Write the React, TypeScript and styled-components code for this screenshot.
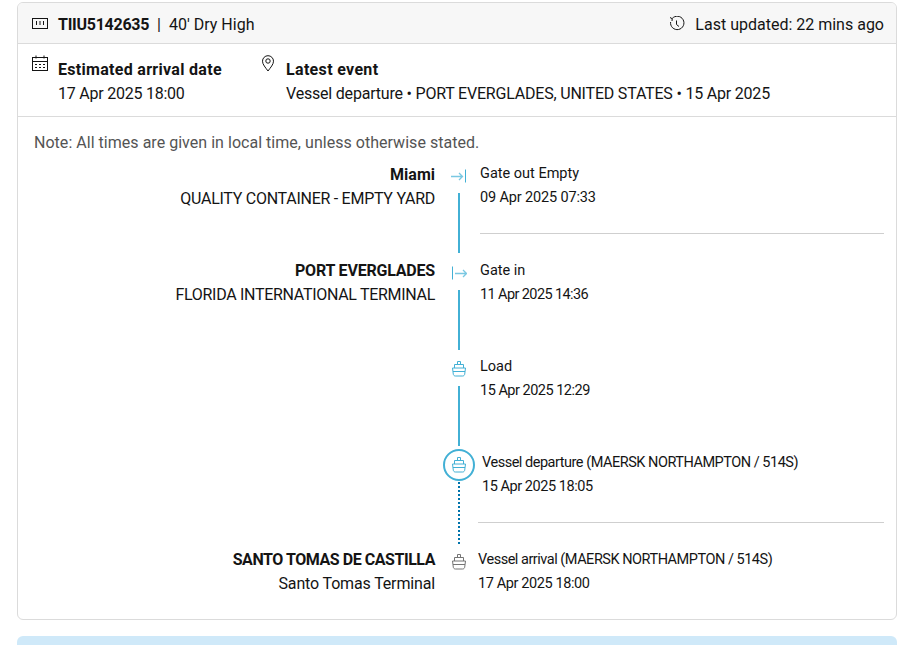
import styled, { createGlobalStyle } from "styled-components";

const GlobalStyle = createGlobalStyle`
  html, body {
    margin: 0;
    height: 645px;
    overflow: hidden;
    background: #fff;
    font-family: Roboto, "Noto Sans", "Liberation Sans", sans-serif;
    color: #141414;
  }
`;

const Page = styled.div`
  padding: 2px 9px 0 17px;
`;

const Card = styled.section`
  height: 618px;
  box-sizing: border-box;
  border: 1px solid #dbdbdb;
  border-radius: 6px;
  overflow: hidden;
`;

const CardHeader = styled.header`
  height: 41px;
  box-sizing: border-box;
  display: flex;
  align-items: center;
  justify-content: space-between;
  padding: 2px 12px 0 14px;
  background: #f7f7f7;
  border-bottom: 1px solid #dbdbdb;
`;

const HeaderSide = styled.div`
  display: flex;
  align-items: center;
  font-size: 16px;
`;

const ContainerId = styled.strong`
  margin-left: 10px;
  font-weight: 700;
  letter-spacing: -0.27px;
`;

const Muted = styled.span<{ $gap?: number }>`
  margin-left: ${(p) => p.$gap ?? 7}px;
`;

const Summary = styled.div`
  height: 73px;
  box-sizing: border-box;
  display: flex;
  padding: 14px 14px 0;
  border-bottom: 1px solid #dbdbdb;
`;

const SummaryItem = styled.div<{ $width?: number }>`
  display: flex;
  align-items: flex-start;
  gap: 10px;
  width: ${(p) => (p.$width ? `${p.$width}px` : "auto")};
  font-size: 16px;
  line-height: 24px;

  svg {
    margin-top: -3px;
    flex: none;
  }
`;

const Strong = styled.div<{ $track?: number }>`
  font-weight: 700;
  letter-spacing: ${(p) => p.$track ?? 0}px;
`;

const Line = styled.div<{ $track?: number }>`
  letter-spacing: ${(p) => p.$track ?? 0}px;
`;

const Note = styled.p`
  margin: 14px 0 0 16px;
  font-size: 16px;
  line-height: 24px;
  letter-spacing: 0.03px;
  color: #545454;
`;

const Timeline = styled.div`
  margin-top: 5px;
`;

const Row = styled.div`
  display: grid;
  grid-template-columns: 417px 48px 1fr;
  height: 96.5px;
`;

const Place = styled.div<{ $top?: number }>`
  padding-top: ${(p) => p.$top ?? 2}px;
  text-align: right;
  font-size: 16px;
  line-height: 24px;
`;

const Rail = styled.div`
  display: flex;
  flex-direction: column;
  align-items: center;
`;

const IconSlot = styled.div`
  height: 32px;
  display: flex;
  align-items: center;
  justify-content: center;
  flex: none;
`;

const BigIcon = styled.div`
  width: 32px;
  height: 32px;
  box-sizing: border-box;
  margin-top: -1px;
  display: flex;
  align-items: center;
  justify-content: center;
  border: 2px solid #42b0d5;
  border-radius: 50%;
  flex: none;
`;

const Connector = styled.div<{ $dotted?: boolean }>`
  width: 2px;
  height: ${(p) => (p.$dotted ? 62 : 60)}px;
  margin-top: 1px;
  background: ${(p) =>
    p.$dotted
      ? "repeating-linear-gradient(to bottom, #0073ab 0 2px, transparent 2px 4px)"
      : "#42b0d5"};
`;

const Event = styled.div<{ $left: number; $top?: number }>`
  margin-left: ${(p) => p.$left}px;
  margin-right: 12px;
  padding-top: ${(p) => p.$top ?? 2}px;
  font-size: 14.5px;
  line-height: 24px;
`;

const Divider = styled.div<{ $left: number }>`
  height: 1px;
  margin: 23px 0 0 ${(p) => p.$left}px;
  background: #cfcfcf;
`;

const Banner = styled.div`
  height: 40px;
  margin-top: 16px;
  background: #cfe9f9;
  border-radius: 6px 6px 0 0;
`;

const ContainerIcon = () => (
  <svg width="16" height="12" viewBox="0 0 16 12" fill="none" stroke="#141414">
    <rect x="0.5" y="0.5" width="15" height="10" />
    <path d="M4.5 3v4M8 3v4M11.5 3v4" />
  </svg>
);

const ClockIcon = () => (
  <svg width="16" height="16" viewBox="0 0 16 16" fill="none" stroke="#141414" strokeWidth="1">
    <path d="M3.2 2.5A6.700 6.700 0 1 1 1.600 6" />
    <path d="M1 1.500l2.200 1.200L3 5" />
    <path d="M7.500 4.500v4l2.500 2" />
  </svg>
);

const CalendarIcon = () => (
  <svg width="16" height="17" viewBox="0 0 16 17" fill="none" stroke="#141414">
    <rect x="0.5" y="2.500" width="15" height="13" />
    <path d="M0.500 6.500h15M4 0.500v3M12 0.500v3" />
    <path d="M3 9.500h2M7 9.500h2M11 9.500h2M3 12.500h2M7 12.500h2M11 12.500h2" />
  </svg>
);

const PinIcon = () => (
  <svg width="15" height="17" viewBox="0 0 15 17" fill="none" stroke="#141414">
    <path d="M7 16C4.500 12.500 1.500 9.500 1.500 6.200a5.500 5.500 0 0 1 11 0C12.500 9.500 9.500 12.500 7 16Z" />
    <circle cx="7" cy="6" r="2.200" />
  </svg>
);

const GateOutIcon = () => (
  <svg width="16" height="14" viewBox="0 0 16 14" fill="none" stroke="#42b0d5">
    <path d="M0 7.500h11.500M8 4l3.500 3.500L8 11" strokeOpacity="0.7" strokeWidth="1.300" />
    <path d="M14.500 0.500v13" />
  </svg>
);

const GateInIcon = () => (
  <svg width="16" height="14" viewBox="0 0 16 14" fill="none" stroke="#42b0d5">
    <path d="M1.500 0.500v13" />
    <path d="M4 7.500h11.500M12 4l3.500 3.500L12 11" strokeOpacity="0.7" strokeWidth="1.300" />
  </svg>
);

const ShipIcon = ({ color }: { color: string }) => (
  <svg width="14" height="16" viewBox="0 0 14 16" fill="none" stroke={color}>
    <path d="M5.500 3.500V0.500h3v3" />
    <path d="M2.500 7V3.500h9V7" />
    <path d="M0.500 7h13l-.8 6.200c-.1 1-1 1.800-2 1.800H3.300c-1 0-1.900-.8-2-1.800Z" />
    <path d="M1 10.500h12" />
  </svg>
);

const App = () => {
  return (
    <>
      <GlobalStyle />
      <Page>
        <Card>
          <CardHeader>
            <HeaderSide>
              <ContainerIcon />
              <ContainerId>TIIU5142635</ContainerId>
              <Muted $gap={8}>|</Muted>
              <Muted $gap={8}>40' Dry High</Muted>
            </HeaderSide>
            <HeaderSide>
              <ClockIcon />
              <Muted $gap={10}>Last updated: 22 mins ago</Muted>
            </HeaderSide>
          </CardHeader>

          <Summary>
            <SummaryItem $width={229}>
              <CalendarIcon />
              <div>
                <Strong $track={0.3}>Estimated arrival date</Strong>
                <Line $track={-0.23}>17 Apr 2025 18:00</Line>
              </div>
            </SummaryItem>
            <SummaryItem>
              <PinIcon />
              <div>
                <Strong $track={0.33}>Latest event</Strong>
                <Line $track={-0.2}>Vessel departure • PORT EVERGLADES, UNITED STATES • 15 Apr 2025</Line>
              </div>
            </SummaryItem>
          </Summary>

          <Note>Note: All times are given in local time, unless otherwise stated.</Note>

          <Timeline>
            <Row>
              <Place $top={3}>
                <Strong>Miami</Strong>
                <Line $track={-0.27}>QUALITY CONTAINER - EMPTY YARD</Line>
              </Place>
              <Rail>
                <IconSlot><GateOutIcon /></IconSlot>
                <Connector />
              </Rail>
              <Event $left={-3}>
                <Line>Gate out Empty</Line>
                <Line $track={-0.15}>09 Apr 2025 07:33</Line>
                <Divider $left={0} />
              </Event>
            </Row>
            <Row>
              <Place>
                <Strong $track={-0.2}>PORT EVERGLADES</Strong>
                <Line $track={-0.3}>FLORIDA INTERNATIONAL TERMINAL</Line>
              </Place>
              <Rail>
                <IconSlot><GateInIcon /></IconSlot>
                <Connector />
              </Rail>
              <Event $left={-3}>
                <Line>Gate in</Line>
                <Line $track={-0.6}>11 Apr 2025 14:36</Line>
              </Event>
            </Row>
            <Row>
              <Place />
              <Rail>
                <IconSlot><ShipIcon color="#42b0d5" /></IconSlot>
                <Connector />
              </Rail>
              <Event $left={-3}>
                <Line>Load</Line>
                <Line $track={-0.5}>15 Apr 2025 12:29</Line>
              </Event>
            </Row>
            <Row>
              <Place />
              <Rail>
                <BigIcon><ShipIcon color="#42b0d5" /></BigIcon>
                <Connector $dotted />
              </Rail>
              <Event $left={-1} $top={1}>
                <Line $track={-0.48}>Vessel departure (MAERSK NORTHAMPTON / 514S)</Line>
                <Line $track={-0.45}>15 Apr 2025 18:05</Line>
                <Divider $left={-4} />
              </Event>
            </Row>
            <Row>
              <Place>
                <Strong $track={-0.45}>SANTO TOMAS DE CASTILLA</Strong>
                <Line $track={-0.15}>Santo Tomas Terminal</Line>
              </Place>
              <Rail>
                <IconSlot><ShipIcon color="#757575" /></IconSlot>
              </Rail>
              <Event $left={-5}>
                <Line $track={-0.48}>Vessel arrival (MAERSK NORTHAMPTON / 514S)</Line>
                <Line $track={-0.4}>17 Apr 2025 18:00</Line>
              </Event>
            </Row>
          </Timeline>
        </Card>
        <Banner />
      </Page>
    </>
  );
};

export default App;
